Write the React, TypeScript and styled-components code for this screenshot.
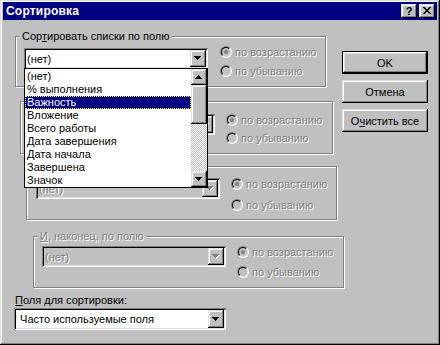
import React from 'react';
import styled, { createGlobalStyle, css } from 'styled-components';

const GlobalStyle = createGlobalStyle`
  html, body {
    margin: 0;
    padding: 0;
    background: #c0c0c0;
  }
  body {
    font-family: "Liberation Sans", Arial, sans-serif;
    font-size: 11px;
    color: #000;
  }
  * {
    box-sizing: border-box;
  }
`;

const raised = css`
  box-shadow: inset -1px -1px #000, inset 1px 1px #dfdfdf, inset -2px -2px #808080, inset 2px 2px #fff;
`;

const sunken = css`
  box-shadow: inset 1px 1px #808080, inset -1px -1px #fff, inset 2px 2px #000, inset -2px -2px #dfdfdf;
`;

const disabledText = css`
  color: #808080;
  text-shadow: 1px 1px 0 #fff;
`;

const Window = styled.div`
  width: 440px;
  height: 345px;
  background: #c0c0c0;
  padding: 2px 3px 3px 3px;
  display: flex;
  flex-direction: column;
  ${raised}
`;

const TitleBar = styled.div`
  height: 18px;
  flex-shrink: 0;
  background: #000080;
  color: #fff;
  display: flex;
  align-items: center;
  padding: 0 2px 0 3px;
  gap: 2px;
`;

const Title = styled.div`
  flex: 1;
  font-weight: bold;
  font-size: 12px;
  letter-spacing: 0.2px;
`;

const TitleButton = styled.div`
  width: 16px;
  height: 14px;
  background: #c0c0c0;
  color: #000;
  display: flex;
  align-items: center;
  justify-content: center;
  font-weight: bold;
  font-size: 11px;
  line-height: 14px;
  padding-bottom: 1px;
  ${raised}
`;

const Body = styled.div`
  flex: 1;
  display: flex;
  padding: 16px 0 0 12px;
`;

const LeftCol = styled.div`
  width: 327px;
  flex-shrink: 0;
  display: flex;
  flex-direction: column;
  align-items: flex-start;
`;

const ButtonCol = styled.div`
  width: 86px;
  display: flex;
  flex-direction: column;
  gap: 6px;
  padding-top: 15px;
`;

const Button = styled.div<{ $default?: boolean }>`
  height: 23px;
  display: flex;
  align-items: center;
  justify-content: center;
  background: #c0c0c0;
  ${p =>
    p.$default
      ? css`
          box-shadow: inset 0 0 0 1px #000, inset -2px -2px #000, inset 2px 2px #fff, inset -3px -3px #808080,
            inset 3px 3px #dfdfdf;
        `
      : raised}
`;

type GroupProps = { $x: number; $w: number; $h: number; $mt: number };

const GroupBox = styled.div<GroupProps>`
  position: relative;
  flex-shrink: 0;
  margin-left: ${p => p.$x}px;
  margin-top: ${p => p.$mt}px;
  width: ${p => p.$w}px;
  height: ${p => p.$h}px;
  border: 1px solid #808080;
  box-shadow: 1px 1px 0 #fff, inset 1px 1px 0 #fff;
`;

const Legend = styled.div<{ $disabled?: boolean }>`
  position: absolute;
  top: -7px;
  left: 4px;
  padding: 0 2px;
  line-height: 13px;
  background: #c0c0c0;
  white-space: nowrap;
  ${p => p.$disabled && disabledText}
`;

const GroupRow = styled.div<{ $pl: number }>`
  display: flex;
  align-items: flex-start;
  padding-left: ${p => p.$pl}px;
`;

const ComboBox = styled.div<{ $w: number; $mt: number; $disabled?: boolean; $h?: number; $ml?: number }>`
  position: relative;
  flex-shrink: 0;
  width: ${p => p.$w}px;
  height: ${p => p.$h ?? 21}px;
  margin-top: ${p => p.$mt}px;
  margin-left: ${p => p.$ml ?? 0}px;
  padding: 2px;
  display: flex;
  align-items: stretch;
  background: ${p => (p.$disabled ? '#c0c0c0' : '#fff')};
  ${sunken}
`;

const ComboText = styled.div<{ $disabled?: boolean }>`
  flex: 1;
  padding-left: 1px;
  display: flex;
  align-items: center;
  white-space: nowrap;
  ${p => p.$disabled && disabledText}
`;

const ArrowButton = styled.div`
  width: 16px;
  flex-shrink: 0;
  background: #c0c0c0;
  display: flex;
  align-items: center;
  justify-content: center;
  ${raised}
`;

const RadioCol = styled.div<{ $ml: number; $mt: number; $gap: number }>`
  display: flex;
  flex-direction: column;
  margin-left: ${p => p.$ml}px;
  margin-top: ${p => p.$mt}px;
  gap: ${p => p.$gap}px;
`;

const RadioRow = styled.div`
  height: 16px;
  display: flex;
  align-items: center;
  gap: 3px;
  white-space: nowrap;
  ${disabledText}
`;

const RadioOuter = styled.span`
  width: 12px;
  height: 12px;
  border-radius: 50%;
  border: 1px solid;
  border-color: #808080 #fff #fff #808080;
  display: flex;
  flex-shrink: 0;
`;

const RadioInner = styled.span`
  flex: 1;
  border-radius: 50%;
  border: 1px solid;
  border-color: #000 #dfdfdf #dfdfdf #000;
  background: #c0c0c0;
  display: flex;
  align-items: center;
  justify-content: center;
`;

const RadioDot = styled.span`
  width: 4px;
  height: 4px;
  border-radius: 50%;
  background: #808080;
`;

const DropList = styled.div`
  position: absolute;
  top: 20px;
  left: 0;
  width: 184px;
  height: 120px;
  z-index: 10;
  background: #fff;
  border: 1px solid #000;
  display: flex;
`;

const Items = styled.div`
  flex: 1;
  padding-top: 1px;
`;

const Item = styled.div<{ $selected?: boolean }>`
  height: 13px;
  line-height: 11px;
  padding-left: 1px;
  white-space: nowrap;
  border: 1px solid transparent;
  ${p =>
    p.$selected &&
    css`
      background: #000080;
      color: #fff;
      border: 1px dotted #ffff00;
    `}
`;

const ScrollBar = styled.div`
  width: 16px;
  display: flex;
  flex-direction: column;
`;

const ScrollButton = styled.div<{ $h: number }>`
  height: ${p => p.$h}px;
  flex-shrink: 0;
  background: #c0c0c0;
  display: flex;
  align-items: center;
  justify-content: center;
  ${raised}
`;

const ScrollTrack = styled.div`
  flex: 1;
  background: repeating-conic-gradient(#fff 0 25%, #c0c0c0 0 50%) 0 0 / 2px 2px;
`;

const FieldLabel = styled.div`
  margin-top: 6px;
  line-height: 13px;
`;

function Arrow({ up, disabled }: { up?: boolean; disabled?: boolean }) {
  const d = up
    ? 'M3 0h1v1H3z M2 1h3v1H2z M1 2h5v1H1z M0 3h7v1H0z'
    : 'M0 0h7v1H0z M1 1h5v1H1z M2 2h3v1H2z M3 3h1v1H3z';
  return (
    <svg width="8" height="5" viewBox="0 0 8 5" shapeRendering="crispEdges">
      {disabled && <path d={d} fill="#fff" transform="translate(1 1)" />}
      <path d={d} fill={disabled ? '#808080' : '#000'} />
    </svg>
  );
}

function CloseGlyph() {
  return (
    <svg width="8" height="7" viewBox="0 0 8 7" shapeRendering="crispEdges">
      <path
        d="M0 0h2v1H0z M6 0h2v1H6z M1 1h2v1H1z M5 1h2v1H5z M2 2h4v1H2z M3 3h2v1H3z M2 4h4v1H2z M1 5h2v1H1z M5 5h2v1H5z M0 6h2v1H0z M6 6h2v1H6z"
        fill="#000"
      />
    </svg>
  );
}

function Radio({ label, checked }: { label: string; checked?: boolean }) {
  return (
    <RadioRow>
      <RadioOuter>
        <RadioInner>{checked && <RadioDot />}</RadioInner>
      </RadioOuter>
      {label}
    </RadioRow>
  );
}

const fields = [
  '(нет)',
  '% выполнения',
  'Важность',
  'Вложение',
  'Всего работы',
  'Дата завершения',
  'Дата начала',
  'Завершена',
  'Значок',
];

interface GroupSpec {
  label?: React.ReactNode;
  value?: string;
  disabled?: boolean;
  x: number;
  w: number;
  h: number;
  mt: number;
  pl: number;
  comboW: number;
  comboTop: number;
  radioLeft: number;
  radioTop: number;
  radioGap: number;
  open?: boolean;
}

// what sits fully under the open list (2nd/3rd labels, 2nd value) is left out
const groups: GroupSpec[] = [
  {
    label: (
      <>
        Сор<u>т</u>ировать списки по полю
      </>
    ),
    value: '(нет)',
    x: 0, w: 311, h: 51, mt: 0, pl: 8, comboW: 184, comboTop: 11,
    radioLeft: 12, radioTop: 7, radioGap: 3, open: true,
  },
  {
    disabled: true,
    x: 5, w: 313, h: 53, mt: 14, pl: 9, comboW: 185, comboTop: 12,
    radioLeft: 11, radioTop: 10, radioGap: 2,
  },
  {
    value: '(нет)',
    disabled: true,
    x: 11, w: 311, h: 54, mt: 12, pl: 9, comboW: 184, comboTop: 11,
    radioLeft: 11, radioTop: 9, radioGap: 5,
  },
  {
    label: (
      <>
        <u>И</u>, наконец, по полю
      </>
    ),
    value: '(нет)',
    disabled: true,
    x: 18, w: 311, h: 52, mt: 16, pl: 8, comboW: 184, comboTop: 9,
    radioLeft: 11, radioTop: 7, radioGap: 4,
  },
];

function SortGroup({ g }: { g: GroupSpec }) {
  return (
    <GroupBox $x={g.x} $w={g.w} $h={g.h} $mt={g.mt}>
      {g.label && <Legend $disabled={g.disabled}>{g.label}</Legend>}
      <GroupRow $pl={g.pl}>
        <ComboBox $w={g.comboW} $mt={g.comboTop} $disabled={g.disabled}>
          <ComboText $disabled={g.disabled}>{g.value}</ComboText>
          <ArrowButton>
            <Arrow disabled={g.disabled} />
          </ArrowButton>
          {g.open && (
            <DropList>
              <Items>
                {fields.map(f => (
                  <Item key={f} $selected={f === 'Важность'}>
                    {f}
                  </Item>
                ))}
              </Items>
              <ScrollBar>
                <ScrollButton $h={16}>
                  <Arrow up />
                </ScrollButton>
                <ScrollButton $h={39} />
                <ScrollTrack />
                <ScrollButton $h={16}>
                  <Arrow />
                </ScrollButton>
              </ScrollBar>
            </DropList>
          )}
        </ComboBox>
        <RadioCol $ml={g.radioLeft} $mt={g.radioTop} $gap={g.radioGap}>
          <Radio label="по возрастанию" checked />
          <Radio label="по убыванию" />
        </RadioCol>
      </GroupRow>
    </GroupBox>
  );
}

export default function App() {
  return (
    <>
      <GlobalStyle />
      <Window>
        <TitleBar>
          <Title>Сортировка</Title>
          <TitleButton>?</TitleButton>
          <TitleButton>
            <CloseGlyph />
          </TitleButton>
        </TitleBar>
        <Body>
          <LeftCol>
            {groups.map((g, i) => (
              <SortGroup key={i} g={g} />
            ))}
            <FieldLabel>
              <u>П</u>оля для сортировки:
            </FieldLabel>
            <ComboBox $w={212} $mt={1} $h={22} $ml={-1}>
              <ComboText>&nbsp;Часто используемые поля</ComboText>
              <ArrowButton>
                <Arrow />
              </ArrowButton>
            </ComboBox>
          </LeftCol>
          <ButtonCol>
            <Button $default>OK</Button>
            <Button>Отмена</Button>
            <Button>
              О<u>ч</u>истить все
            </Button>
          </ButtonCol>
        </Body>
      </Window>
    </>
  );
}
